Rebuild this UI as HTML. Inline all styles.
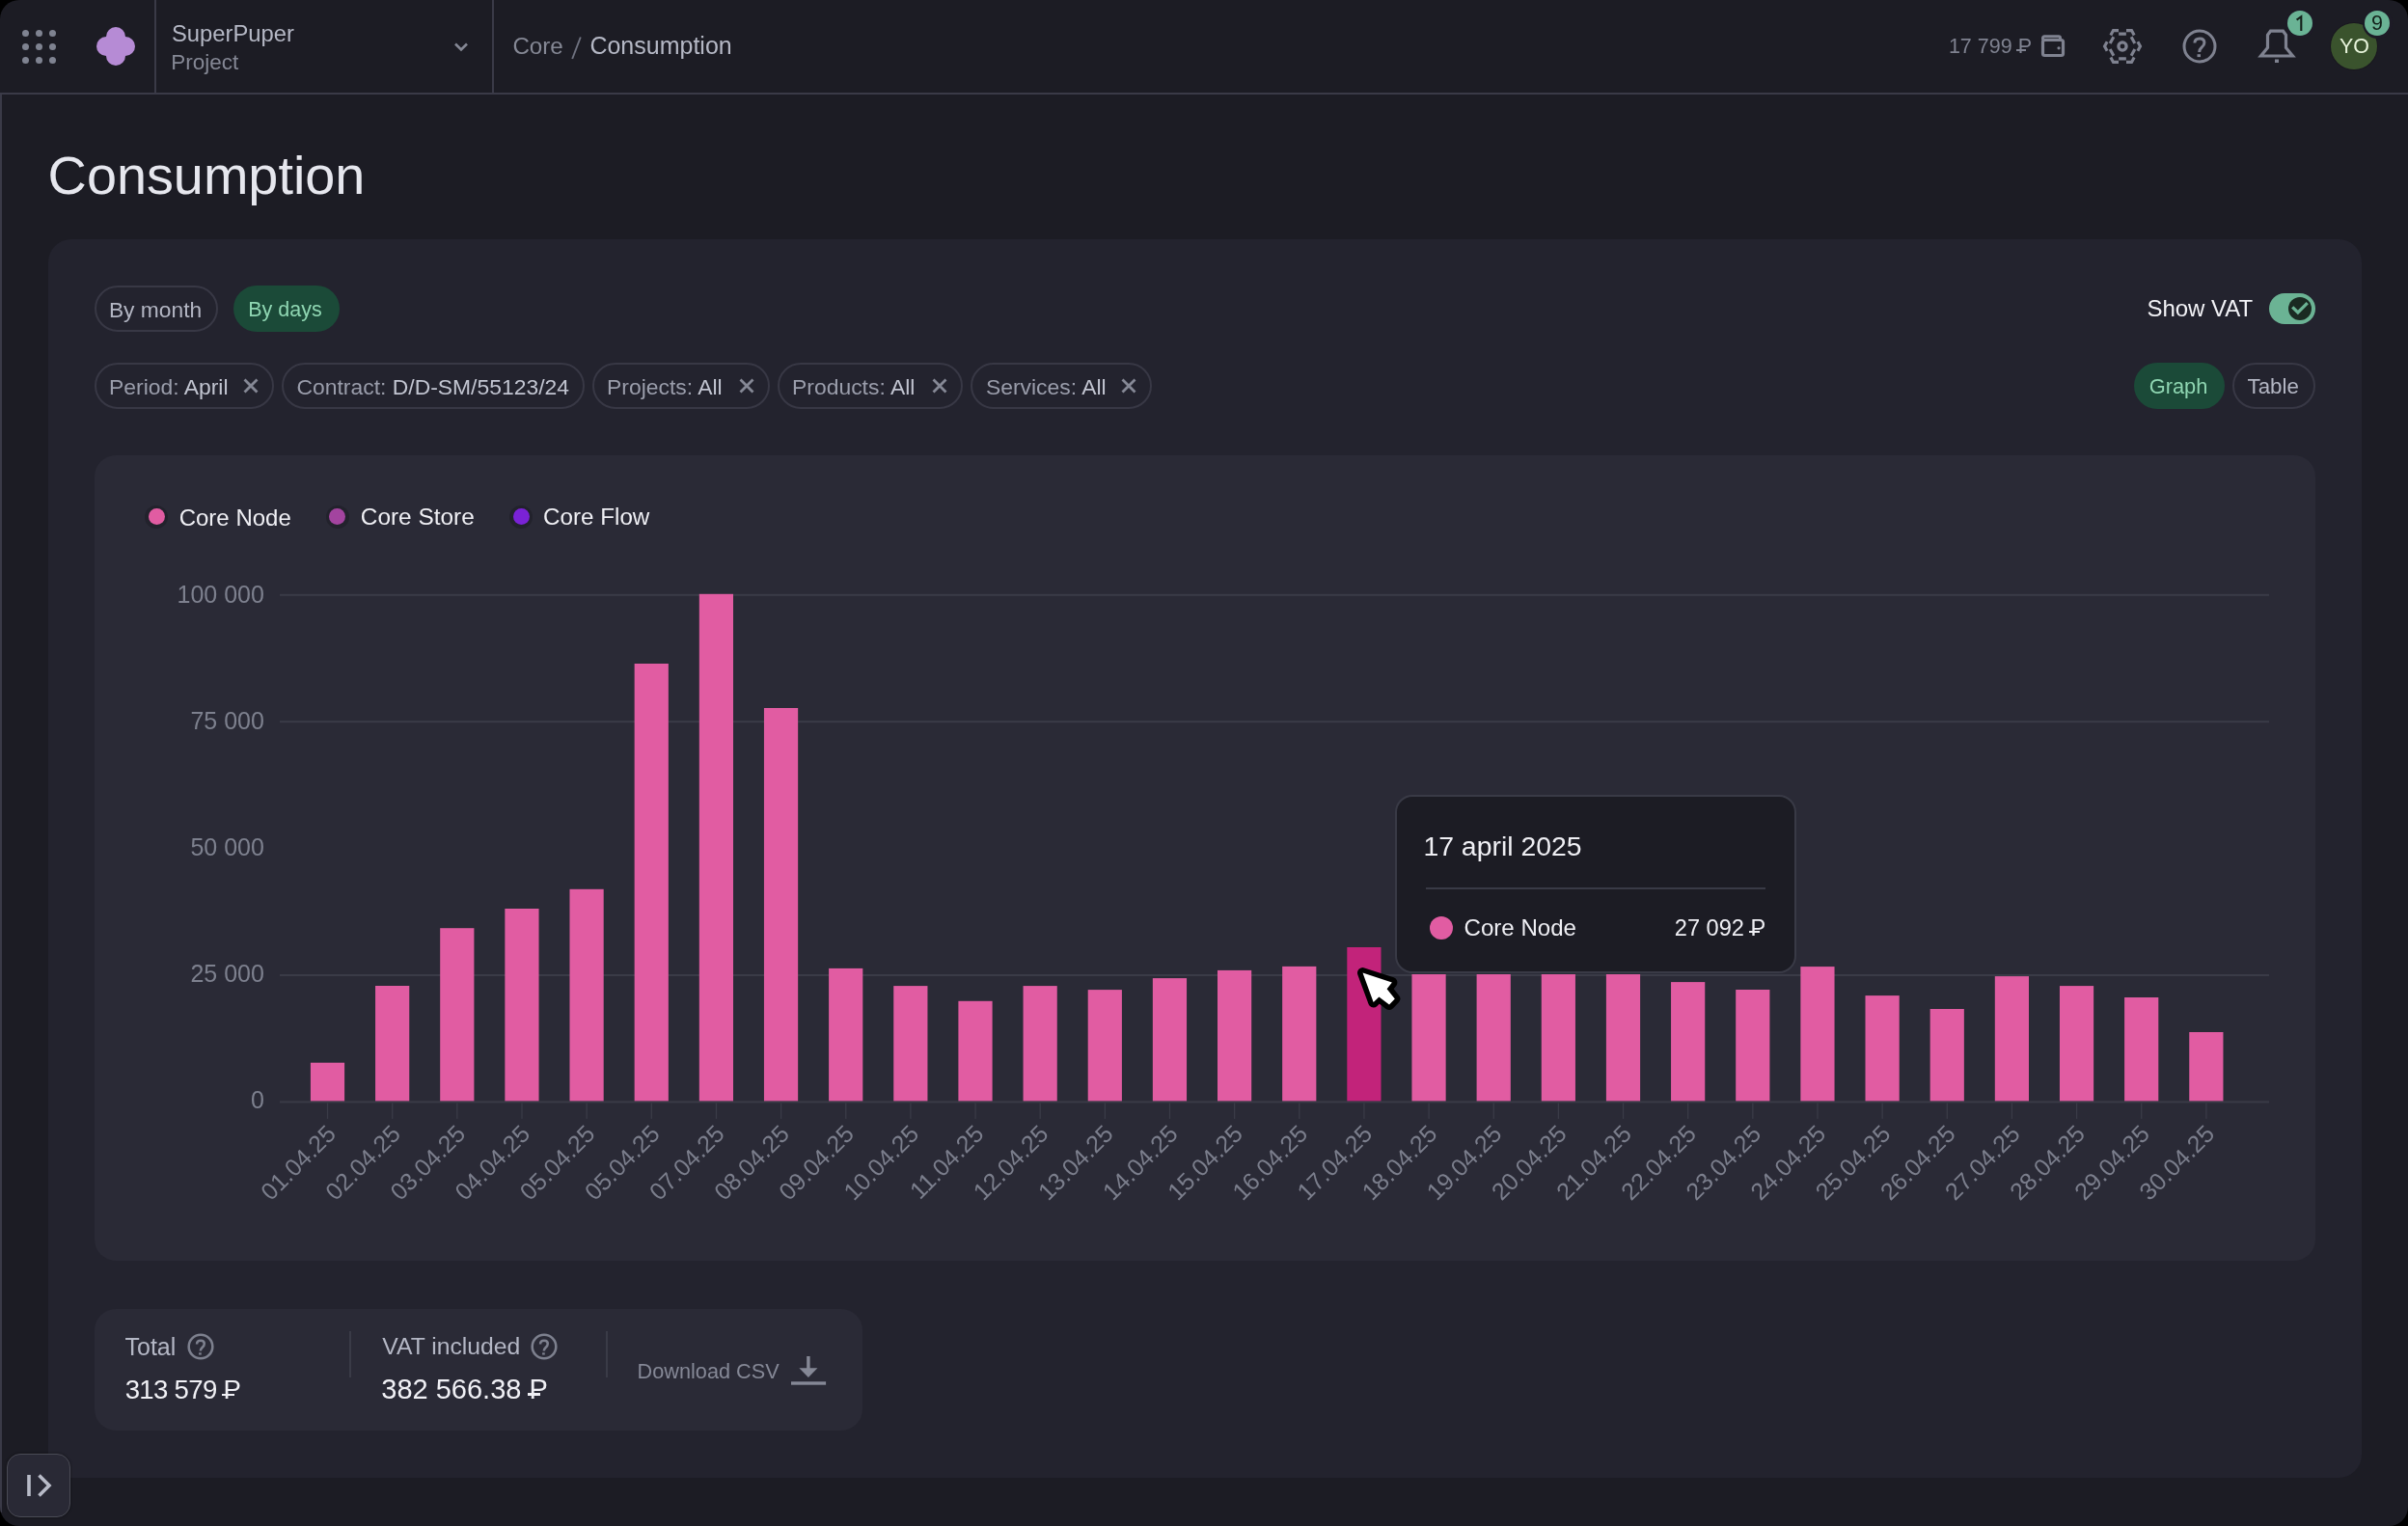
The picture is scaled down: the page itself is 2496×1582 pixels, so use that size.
<!DOCTYPE html>
<html><head><meta charset="utf-8"><style>
html,body{margin:0;padding:0;background:#000;width:2496px;height:1582px;overflow:hidden}
#app{will-change:transform;position:absolute;left:0;top:0;width:2496px;height:1582px;background:#1c1c24;border-radius:20px;overflow:hidden}
.abs{position:absolute}
.t{position:absolute;white-space:nowrap;line-height:1;font-family:"Liberation Sans",sans-serif}
svg text{font-family:"Liberation Sans",sans-serif}
.dot{position:absolute;width:7px;height:7px;border-radius:50%;background:#7f8391}
.rub{position:relative;display:inline-block}
.rub i{position:absolute;left:-0.06em;width:0.47em;height:0.08em;bottom:0.30em;background:currentColor}
</style></head><body><div id="app">
<div class="dot" style="left:22.5px;top:30.5px"></div>
<div class="dot" style="left:36.5px;top:30.5px"></div>
<div class="dot" style="left:50.5px;top:30.5px"></div>
<div class="dot" style="left:22.5px;top:44.5px"></div>
<div class="dot" style="left:36.5px;top:44.5px"></div>
<div class="dot" style="left:50.5px;top:44.5px"></div>
<div class="dot" style="left:22.5px;top:58.5px"></div>
<div class="dot" style="left:36.5px;top:58.5px"></div>
<div class="dot" style="left:50.5px;top:58.5px"></div>
<svg class="abs" style="left:99px;top:27px" width="42" height="42" viewBox="0 0 42 42"><g fill="#b68bd5">
<circle cx="21" cy="11" r="10"/><circle cx="21" cy="31" r="10"/><circle cx="11" cy="21" r="10"/><circle cx="31" cy="21" r="10"/><rect x="11" y="11" width="20" height="20"/></g></svg>
<div class="abs" style="left:160px;top:0;width:2px;height:96px;background:#3a3a47"></div>
<div class="abs" style="left:510px;top:0;width:2px;height:96px;background:#3a3a47"></div>
<div class="abs" style="left:0;top:96px;width:2496px;height:2px;background:#3a3a47"></div>
<div class="abs" style="left:0;top:98px;width:2px;height:1470px;background:#3a3a47"></div>
<div class="t" style="left:177.9px;top:22.8px;font-size:23.8px;color:#b5b8c5;">SuperPuper</div>
<div class="t" style="left:177.2px;top:53.8px;font-size:22.5px;color:#858895;">Project</div>
<svg class="abs" style="left:468px;top:39.2px" width="20" height="20" viewBox="0 0 20 20"><path d="M4 6.5 L10 12.5 L16 6.5" fill="none" stroke="#858895" stroke-width="2.6"/></svg>
<div class="t" style="left:531.4px;top:36.0px;font-size:24.2px;color:#858895;">Core</div>
<svg class="abs" style="left:588px;top:36px" width="20" height="28" viewBox="0 0 20 28"><path d="M13.8 2.5 L5.2 25" stroke="#6f7280" stroke-width="1.9"/></svg>
<div class="t" style="left:611.4px;top:35.4px;font-size:25px;color:#b5b8c5;">Consumption</div>
<div class="t" style="left:2019.9px;top:38.0px;font-size:21.5px;color:#7f8290;">17 799 <span class="rub">P<i></i></span></div>
<svg class="abs" style="left:2112px;top:34px" width="32" height="28" viewBox="0 0 32 28">
<path d="M5.5 7.5 V5.5 Q5.5 3.8 7.2 3.8 H21.8 Q23.5 3.8 23.5 5.5 V7.5" fill="none" stroke="#7f8290" stroke-width="3"/>
<rect x="5.5" y="7.5" width="21" height="16" rx="2" fill="none" stroke="#7f8290" stroke-width="3.2"/>
<circle cx="22" cy="15.8" r="1.6" fill="#7f8290"/></svg>
<svg class="abs" style="left:2170px;top:20px" width="60" height="56" viewBox="2170 20 60 56"><g fill="none" stroke="#7f8290" stroke-width="3.1" stroke-linejoin="miter"><path d="M2184.15 52.82 L2181.50 48.00 L2184.15 43.18 M2187.85 36.42 L2190.50 31.60 L2196.00 31.60 M2204.00 31.60 L2209.50 31.60 L2212.15 36.42 M2215.85 43.18 L2218.50 48.00 L2215.85 52.82 M2212.15 59.58 L2209.50 64.40 L2204.00 64.40 M2196.00 64.40 L2190.50 64.40 L2187.85 59.58 M2187.17 44.94 L2190.87 38.19 M2196.15 35.10 L2203.85 35.10 M2209.13 38.19 L2212.83 44.94 M2212.83 51.06 L2209.13 57.81 M2203.85 60.90 L2196.15 60.90 M2190.87 57.81 L2187.17 51.06"/><circle cx="2200" cy="48" r="4.1" stroke-width="3.3"/></g></svg>
<svg class="abs" style="left:2260px;top:28px" width="40" height="40" viewBox="0 0 40 40"><g fill="none" stroke="#7f8290" stroke-width="3">
<circle cx="20" cy="20" r="16"/><path d="M14.9 16.6 Q14.9 11.9 20.1 11.9 Q24.9 11.9 24.9 16.2 Q24.9 18.9 22.1 21.2 Q19.7 23.3 19.7 26"/></g>
<rect x="17.5" y="28.2" width="3.5" height="2.9" fill="#7f8290"/></svg>
<svg class="abs" style="left:2338px;top:28px" width="44" height="40" viewBox="0 0 44 40"><g fill="none" stroke="#7f8290" stroke-width="3.2">
<path d="M12.5 21.5 V8.2 L15.5 4.2 H28.5 L31.5 8.2 V21.5 L38.5 30 H5.5 Z" stroke-linejoin="miter"/></g>
<rect x="20" y="33.5" width="4" height="3.5" fill="#7f8290"/></svg>
<div class="abs" style="left:2415px;top:23px;width:50px;height:50px;border-radius:50%;background:#19171f"></div>
<div class="abs" style="left:2416px;top:24px;width:48px;height:48px;border-radius:50%;background:#3a532d"></div>
<div class="t" style="left:2425.0px;top:38.4px;font-size:21.4px;color:#e8f5dc;">YO</div>
<div class="abs" style="left:2368.5px;top:8.5px;width:31px;height:31px;border-radius:50%;background:#1d1b26"></div>
<div class="abs" style="left:2371px;top:11px;width:26px;height:26px;border-radius:50%;background:#6ab395"></div>
<svg class="abs" style="left:2374px;top:14px" width="20" height="20" viewBox="2374 14 20 20"><path d="M2385.3 31.9 V17.2 L2380.6 20.6" fill="none" stroke="#13201a" stroke-width="2.1"/></svg>
<div class="abs" style="left:2448.5px;top:8.5px;width:31px;height:31px;border-radius:50%;background:#1d1b26"></div>
<div class="abs" style="left:2451px;top:11px;width:26px;height:26px;border-radius:50%;background:#6ab395"></div>
<div class="t" style="left:2458.0px;top:14.3px;font-size:21.5px;color:#13201a;">9</div>
<div class="t" style="left:49.6px;top:153.8px;font-size:55.8px;color:#e6e7ee;">Consumption</div>
<div class="abs" style="left:50px;top:248px;width:2398px;height:1284px;border-radius:24px;background:#23232e"></div>
<div class="abs" style="left:98px;top:296px;width:128px;height:48px;border-radius:24.0px;box-sizing:border-box;border:2px solid #383845;"></div>
<div class="t" style="left:112.9px;top:309.5px;font-size:22.8px;color:#b3b6c3;">By month</div>
<div class="abs" style="left:242px;top:296px;width:110px;height:48px;border-radius:24.0px;box-sizing:border-box;background:#1b4a38;"></div>
<div class="t" style="left:257.2px;top:310.6px;font-size:21.5px;color:#8fd6b2;">By days</div>
<div class="t" style="left:2225.4px;top:307.7px;font-size:24px;color:#f2f2f6;">Show VAT</div>
<div class="abs" style="left:2352px;top:304px;width:48px;height:32px;border-radius:16px;background:#6bb394"></div>
<div class="abs" style="left:2372px;top:308px;width:24px;height:24px;border-radius:50%;background:#1a2a22"></div>
<svg class="abs" style="left:2372px;top:308px" width="24" height="24" viewBox="0 0 24 24"><path d="M4.2 10.3 L9.9 16 L19.7 6.2" fill="none" stroke="#6bb394" stroke-width="3.2"/></svg>
<div class="abs" style="left:98px;top:376px;width:186px;height:48px;border-radius:24.0px;box-sizing:border-box;border:2px solid #383845;"></div>
<div class="t" style="left:113.1px;top:389.5px;font-size:22.9px;color:#9a9dab;">Period: <span style="color:#c2c5d1">April</span></div>
<svg class="abs" style="left:251px;top:391px" width="18" height="18" viewBox="0 0 18 18"><path d="M2.5 2.5 L15.5 15.5 M15.5 2.5 L2.5 15.5" fill="none" stroke="#858895" stroke-width="2.8"/></svg>
<div class="abs" style="left:292px;top:376px;width:314px;height:48px;border-radius:24.0px;box-sizing:border-box;border:2px solid #383845;"></div>
<div class="t" style="left:307.5px;top:389.5px;font-size:22.9px;color:#9a9dab;">Contract: <span style="color:#c2c5d1">D/D-SM/55123/24</span></div>
<div class="abs" style="left:614px;top:376px;width:184px;height:48px;border-radius:24.0px;box-sizing:border-box;border:2px solid #383845;"></div>
<div class="t" style="left:629.1px;top:389.5px;font-size:22.9px;color:#9a9dab;">Projects: <span style="color:#c2c5d1">All</span></div>
<svg class="abs" style="left:765px;top:391px" width="18" height="18" viewBox="0 0 18 18"><path d="M2.5 2.5 L15.5 15.5 M15.5 2.5 L2.5 15.5" fill="none" stroke="#858895" stroke-width="2.8"/></svg>
<div class="abs" style="left:806px;top:376px;width:192px;height:48px;border-radius:24.0px;box-sizing:border-box;border:2px solid #383845;"></div>
<div class="t" style="left:821.1px;top:389.5px;font-size:22.9px;color:#9a9dab;">Products: <span style="color:#c2c5d1">All</span></div>
<svg class="abs" style="left:965px;top:391px" width="18" height="18" viewBox="0 0 18 18"><path d="M2.5 2.5 L15.5 15.5 M15.5 2.5 L2.5 15.5" fill="none" stroke="#858895" stroke-width="2.8"/></svg>
<div class="abs" style="left:1006px;top:376px;width:188px;height:48px;border-radius:24.0px;box-sizing:border-box;border:2px solid #383845;"></div>
<div class="t" style="left:1021.9px;top:389.5px;font-size:22.9px;color:#9a9dab;">Services: <span style="color:#c2c5d1">All</span></div>
<svg class="abs" style="left:1161px;top:391px" width="18" height="18" viewBox="0 0 18 18"><path d="M2.5 2.5 L15.5 15.5 M15.5 2.5 L2.5 15.5" fill="none" stroke="#858895" stroke-width="2.8"/></svg>
<div class="abs" style="left:2212px;top:376px;width:94px;height:48px;border-radius:24.0px;box-sizing:border-box;background:#1b4a38;"></div>
<div class="t" style="left:2227.7px;top:390.0px;font-size:21.8px;color:#8fd6b2;">Graph</div>
<div class="abs" style="left:2314px;top:376px;width:86px;height:48px;border-radius:24.0px;box-sizing:border-box;border:2px solid #383845;"></div>
<div class="t" style="left:2329.5px;top:389.5px;font-size:22.3px;color:#b3b6c3;">Table</div>
<div class="abs" style="left:98px;top:472px;width:2302px;height:835px;border-radius:22px;background:#2a2a36"></div>
<div class="abs" style="left:150.4px;top:523.8px;width:24px;height:24px;border-radius:50%;background:#22222c"></div>
<div class="abs" style="left:153.9px;top:527.3px;width:17px;height:17px;border-radius:50%;background:#e15ca2"></div>
<div class="t" style="left:185.7px;top:524.6px;font-size:24px;color:#efeff4;">Core Node</div>
<div class="abs" style="left:337.8px;top:523.8px;width:24px;height:24px;border-radius:50%;background:#22222c"></div>
<div class="abs" style="left:341.3px;top:527.3px;width:17px;height:17px;border-radius:50%;background:#a3449f"></div>
<div class="t" style="left:373.8px;top:524.3px;font-size:24.4px;color:#efeff4;">Core Store</div>
<div class="abs" style="left:528px;top:523.8px;width:24px;height:24px;border-radius:50%;background:#22222c"></div>
<div class="abs" style="left:531.5px;top:527.3px;width:17px;height:17px;border-radius:50%;background:#7a22d6"></div>
<div class="t" style="left:563.1px;top:524.4px;font-size:24.2px;color:#efeff4;">Core Flow</div>
<div class="t" style="left:183.5px;top:603.6px;font-size:25px;color:#7d808e;">100 000</div>
<div class="t" style="left:197.4px;top:735.0px;font-size:25px;color:#7d808e;">75 000</div>
<div class="t" style="left:197.4px;top:866.1px;font-size:25px;color:#7d808e;">50 000</div>
<div class="t" style="left:197.4px;top:996.9px;font-size:25px;color:#7d808e;">25 000</div>
<div class="t" style="left:260.0px;top:1127.8px;font-size:25px;color:#7d808e;">0</div>
<svg class="abs" style="left:0;top:0" width="2496" height="1582" viewBox="0 0 2496 1582"><rect x="290" y="615.8" width="2062" height="2" fill="#3a3b47"/><rect x="290" y="747.2" width="2062" height="2" fill="#3a3b47"/><rect x="290" y="1010" width="2062" height="2" fill="#3a3b47"/><rect x="290" y="1141.4" width="2062" height="2" fill="#3a3b47"/><rect x="321.90" y="1101.7" width="35.2" height="39.70" fill="#e15ca2"/><rect x="338.90" y="1143.4" width="1.3" height="16.5" fill="#3a3b47"/><text x="349.50" y="1177" transform="rotate(-45 349.50 1177)" text-anchor="end" font-size="25" fill="#7b7e8c">01.04.25</text><rect x="389.05" y="1022" width="35.2" height="119.40" fill="#e15ca2"/><rect x="406.05" y="1143.4" width="1.3" height="16.5" fill="#3a3b47"/><text x="416.65" y="1177" transform="rotate(-45 416.65 1177)" text-anchor="end" font-size="25" fill="#7b7e8c">02.04.25</text><rect x="456.20" y="962.2" width="35.2" height="179.20" fill="#e15ca2"/><rect x="473.20" y="1143.4" width="1.3" height="16.5" fill="#3a3b47"/><text x="483.80" y="1177" transform="rotate(-45 483.80 1177)" text-anchor="end" font-size="25" fill="#7b7e8c">03.04.25</text><rect x="523.35" y="942" width="35.2" height="199.40" fill="#e15ca2"/><rect x="540.35" y="1143.4" width="1.3" height="16.5" fill="#3a3b47"/><text x="550.95" y="1177" transform="rotate(-45 550.95 1177)" text-anchor="end" font-size="25" fill="#7b7e8c">04.04.25</text><rect x="590.50" y="921.8" width="35.2" height="219.60" fill="#e15ca2"/><rect x="607.50" y="1143.4" width="1.3" height="16.5" fill="#3a3b47"/><text x="618.10" y="1177" transform="rotate(-45 618.10 1177)" text-anchor="end" font-size="25" fill="#7b7e8c">05.04.25</text><rect x="657.65" y="688" width="35.2" height="453.40" fill="#e15ca2"/><rect x="674.65" y="1143.4" width="1.3" height="16.5" fill="#3a3b47"/><text x="685.25" y="1177" transform="rotate(-45 685.25 1177)" text-anchor="end" font-size="25" fill="#7b7e8c">05.04.25</text><rect x="724.80" y="615.8" width="35.2" height="525.60" fill="#e15ca2"/><rect x="741.80" y="1143.4" width="1.3" height="16.5" fill="#3a3b47"/><text x="752.40" y="1177" transform="rotate(-45 752.40 1177)" text-anchor="end" font-size="25" fill="#7b7e8c">07.04.25</text><rect x="791.95" y="734" width="35.2" height="407.40" fill="#e15ca2"/><rect x="808.95" y="1143.4" width="1.3" height="16.5" fill="#3a3b47"/><text x="819.55" y="1177" transform="rotate(-45 819.55 1177)" text-anchor="end" font-size="25" fill="#7b7e8c">08.04.25</text><rect x="859.10" y="1003.9" width="35.2" height="137.50" fill="#e15ca2"/><rect x="876.10" y="1143.4" width="1.3" height="16.5" fill="#3a3b47"/><text x="886.70" y="1177" transform="rotate(-45 886.70 1177)" text-anchor="end" font-size="25" fill="#7b7e8c">09.04.25</text><rect x="926.25" y="1022.1" width="35.2" height="119.30" fill="#e15ca2"/><rect x="943.25" y="1143.4" width="1.3" height="16.5" fill="#3a3b47"/><text x="953.85" y="1177" transform="rotate(-45 953.85 1177)" text-anchor="end" font-size="25" fill="#7b7e8c">10.04.25</text><rect x="993.40" y="1037.8" width="35.2" height="103.60" fill="#e15ca2"/><rect x="1010.40" y="1143.4" width="1.3" height="16.5" fill="#3a3b47"/><text x="1021.00" y="1177" transform="rotate(-45 1021.00 1177)" text-anchor="end" font-size="25" fill="#7b7e8c">11.04.25</text><rect x="1060.55" y="1022.1" width="35.2" height="119.30" fill="#e15ca2"/><rect x="1077.55" y="1143.4" width="1.3" height="16.5" fill="#3a3b47"/><text x="1088.15" y="1177" transform="rotate(-45 1088.15 1177)" text-anchor="end" font-size="25" fill="#7b7e8c">12.04.25</text><rect x="1127.70" y="1026.1" width="35.2" height="115.30" fill="#e15ca2"/><rect x="1144.70" y="1143.4" width="1.3" height="16.5" fill="#3a3b47"/><text x="1155.30" y="1177" transform="rotate(-45 1155.30 1177)" text-anchor="end" font-size="25" fill="#7b7e8c">13.04.25</text><rect x="1194.85" y="1014.1" width="35.2" height="127.30" fill="#e15ca2"/><rect x="1211.85" y="1143.4" width="1.3" height="16.5" fill="#3a3b47"/><text x="1222.45" y="1177" transform="rotate(-45 1222.45 1177)" text-anchor="end" font-size="25" fill="#7b7e8c">14.04.25</text><rect x="1262.00" y="1005.9" width="35.2" height="135.50" fill="#e15ca2"/><rect x="1279.00" y="1143.4" width="1.3" height="16.5" fill="#3a3b47"/><text x="1289.60" y="1177" transform="rotate(-45 1289.60 1177)" text-anchor="end" font-size="25" fill="#7b7e8c">15.04.25</text><rect x="1329.15" y="1001.9" width="35.2" height="139.50" fill="#e15ca2"/><rect x="1346.15" y="1143.4" width="1.3" height="16.5" fill="#3a3b47"/><text x="1356.75" y="1177" transform="rotate(-45 1356.75 1177)" text-anchor="end" font-size="25" fill="#7b7e8c">16.04.25</text><rect x="1396.30" y="982" width="35.2" height="159.40" fill="#c2237a"/><rect x="1413.30" y="1143.4" width="1.3" height="16.5" fill="#3a3b47"/><text x="1423.90" y="1177" transform="rotate(-45 1423.90 1177)" text-anchor="end" font-size="25" fill="#7b7e8c">17.04.25</text><rect x="1463.45" y="1010" width="35.2" height="131.40" fill="#e15ca2"/><rect x="1480.45" y="1143.4" width="1.3" height="16.5" fill="#3a3b47"/><text x="1491.05" y="1177" transform="rotate(-45 1491.05 1177)" text-anchor="end" font-size="25" fill="#7b7e8c">18.04.25</text><rect x="1530.60" y="1010" width="35.2" height="131.40" fill="#e15ca2"/><rect x="1547.60" y="1143.4" width="1.3" height="16.5" fill="#3a3b47"/><text x="1558.20" y="1177" transform="rotate(-45 1558.20 1177)" text-anchor="end" font-size="25" fill="#7b7e8c">19.04.25</text><rect x="1597.75" y="1010" width="35.2" height="131.40" fill="#e15ca2"/><rect x="1614.75" y="1143.4" width="1.3" height="16.5" fill="#3a3b47"/><text x="1625.35" y="1177" transform="rotate(-45 1625.35 1177)" text-anchor="end" font-size="25" fill="#7b7e8c">20.04.25</text><rect x="1664.90" y="1010" width="35.2" height="131.40" fill="#e15ca2"/><rect x="1681.90" y="1143.4" width="1.3" height="16.5" fill="#3a3b47"/><text x="1692.50" y="1177" transform="rotate(-45 1692.50 1177)" text-anchor="end" font-size="25" fill="#7b7e8c">21.04.25</text><rect x="1732.05" y="1018.1" width="35.2" height="123.30" fill="#e15ca2"/><rect x="1749.05" y="1143.4" width="1.3" height="16.5" fill="#3a3b47"/><text x="1759.65" y="1177" transform="rotate(-45 1759.65 1177)" text-anchor="end" font-size="25" fill="#7b7e8c">22.04.25</text><rect x="1799.20" y="1026" width="35.2" height="115.40" fill="#e15ca2"/><rect x="1816.20" y="1143.4" width="1.3" height="16.5" fill="#3a3b47"/><text x="1826.80" y="1177" transform="rotate(-45 1826.80 1177)" text-anchor="end" font-size="25" fill="#7b7e8c">23.04.25</text><rect x="1866.35" y="1002.1" width="35.2" height="139.30" fill="#e15ca2"/><rect x="1883.35" y="1143.4" width="1.3" height="16.5" fill="#3a3b47"/><text x="1893.95" y="1177" transform="rotate(-45 1893.95 1177)" text-anchor="end" font-size="25" fill="#7b7e8c">24.04.25</text><rect x="1933.50" y="1032.1" width="35.2" height="109.30" fill="#e15ca2"/><rect x="1950.50" y="1143.4" width="1.3" height="16.5" fill="#3a3b47"/><text x="1961.10" y="1177" transform="rotate(-45 1961.10 1177)" text-anchor="end" font-size="25" fill="#7b7e8c">25.04.25</text><rect x="2000.65" y="1046" width="35.2" height="95.40" fill="#e15ca2"/><rect x="2017.65" y="1143.4" width="1.3" height="16.5" fill="#3a3b47"/><text x="2028.25" y="1177" transform="rotate(-45 2028.25 1177)" text-anchor="end" font-size="25" fill="#7b7e8c">26.04.25</text><rect x="2067.80" y="1012.1" width="35.2" height="129.30" fill="#e15ca2"/><rect x="2084.80" y="1143.4" width="1.3" height="16.5" fill="#3a3b47"/><text x="2095.40" y="1177" transform="rotate(-45 2095.40 1177)" text-anchor="end" font-size="25" fill="#7b7e8c">27.04.25</text><rect x="2134.95" y="1022.1" width="35.2" height="119.30" fill="#e15ca2"/><rect x="2151.95" y="1143.4" width="1.3" height="16.5" fill="#3a3b47"/><text x="2162.55" y="1177" transform="rotate(-45 2162.55 1177)" text-anchor="end" font-size="25" fill="#7b7e8c">28.04.25</text><rect x="2202.10" y="1034" width="35.2" height="107.40" fill="#e15ca2"/><rect x="2219.10" y="1143.4" width="1.3" height="16.5" fill="#3a3b47"/><text x="2229.70" y="1177" transform="rotate(-45 2229.70 1177)" text-anchor="end" font-size="25" fill="#7b7e8c">29.04.25</text><rect x="2269.25" y="1070" width="35.2" height="71.40" fill="#e15ca2"/><rect x="2286.25" y="1143.4" width="1.3" height="16.5" fill="#3a3b47"/><text x="2296.85" y="1177" transform="rotate(-45 2296.85 1177)" text-anchor="end" font-size="25" fill="#7b7e8c">30.04.25</text></svg>
<div class="abs" style="left:1446px;top:824px;width:416px;height:184.5px;box-sizing:border-box;border-radius:18px;background:#1c1c24;border:2px solid #393a46"></div>
<div class="t" style="left:1475.4px;top:862.9px;font-size:28.4px;color:#efeff4;">17 april 2025</div>
<div class="abs" style="left:1478px;top:920px;width:352px;height:2px;background:#393a46"></div>
<div class="abs" style="left:1482px;top:950px;width:24px;height:24px;border-radius:50%;background:#e15ca2"></div>
<div class="t" style="left:1517.5px;top:950.1px;font-size:24.1px;color:#efeff4;">Core Node</div>
<div class="t" style="left:1735.8px;top:950.5px;font-size:23.6px;color:#efeff4;">27 092 <span class="rub">P<i></i></span></div>
<svg class="abs" style="left:1400px;top:996px" width="60" height="60" viewBox="1400 996 60 60">
<path transform="translate(1429 1025) scale(1.05) translate(-1430 -1026)" d="M1414.3 1010.4 L1443.2 1019.8 L1438.2 1026.2 L1446 1035.9 L1440.5 1041.8 L1430.4 1034 L1424.9 1039.3 Z" fill="#fff" stroke="#000" stroke-width="10.5" stroke-linejoin="round" paint-order="stroke"/></svg>
<div class="abs" style="left:98px;top:1357px;width:796px;height:126px;border-radius:22px;background:#2a2a36"></div>
<div class="t" style="left:129.5px;top:1383.5px;font-size:25px;color:#b4b7c5;">Total</div>
<svg class="abs" style="left:193px;top:1380.8px" width="30" height="30" viewBox="0 0 30 30"><g transform="translate(15 15) scale(0.77) translate(-20 -20)"><g fill="none" stroke="#7d808e" stroke-width="3.3">
<circle cx="20" cy="20" r="16"/><path d="M14.9 16.6 Q14.9 11.9 20.1 11.9 Q24.9 11.9 24.9 16.2 Q24.9 18.9 22.1 21.2 Q19.7 23.3 19.7 26"/></g>
<rect x="17.5" y="28.2" width="3.5" height="2.9" fill="#7d808e"/></g></svg>
<div class="t" style="left:129.7px;top:1427.4px;font-size:27.6px;color:#f0f0f5;letter-spacing:-0.7px;">313 579 <span class="rub">P<i></i></span></div>
<div class="abs" style="left:362px;top:1380px;width:2px;height:48px;background:#3a3b47"></div>
<div class="t" style="left:396.3px;top:1383.8px;font-size:24.75px;color:#b4b7c5;">VAT included</div>
<svg class="abs" style="left:548.7px;top:1380.8px" width="30" height="30" viewBox="0 0 30 30"><g transform="translate(15 15) scale(0.77) translate(-20 -20)"><g fill="none" stroke="#7d808e" stroke-width="3.3">
<circle cx="20" cy="20" r="16"/><path d="M14.9 16.6 Q14.9 11.9 20.1 11.9 Q24.9 11.9 24.9 16.2 Q24.9 18.9 22.1 21.2 Q19.7 23.3 19.7 26"/></g>
<rect x="17.5" y="28.2" width="3.5" height="2.9" fill="#7d808e"/></g></svg>
<div class="t" style="left:395.3px;top:1426.2px;font-size:29px;color:#f0f0f5;">382 566.38 <span class="rub">P<i></i></span></div>
<div class="abs" style="left:628px;top:1380px;width:2px;height:48px;background:#3a3b47"></div>
<div class="t" style="left:660.6px;top:1410.6px;font-size:21.7px;color:#858896;">Download CSV</div>
<svg class="abs" style="left:815px;top:1400px" width="45" height="40" viewBox="815 1400 45 40"><g fill="#858896">
<rect x="836.2" y="1406" width="3.4" height="13"/><path d="M828.4 1418.3 H847.4 L837.9 1428 Z"/><rect x="820" y="1432.3" width="36.1" height="3.4"/></g></svg>
<div class="abs" style="left:7px;top:1507px;width:66px;height:66px;box-sizing:border-box;border-radius:14px;background:#292935;border:1.5px solid #4a4b55;box-shadow:0 0 3px rgba(0,0,0,.4)"></div>
<svg class="abs" style="left:20px;top:1520px" width="40" height="40" viewBox="0 0 40 40"><g fill="none" stroke="#b8bbc8" stroke-width="3.6">
<path d="M10 9 V31"/><path d="M20.5 9.5 L31 20 L20.5 30.5"/></g></svg>
</div></body></html>
